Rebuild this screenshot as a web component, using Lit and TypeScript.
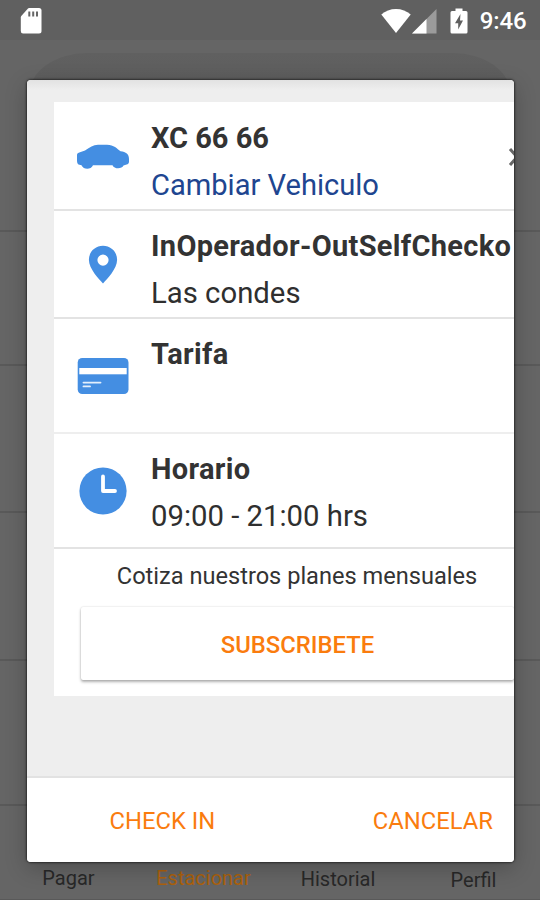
import { LitElement, html, css, svg } from "lit";
import { customElement } from "lit/decorators.js";

const car = svg`<svg class="icon" width="54" height="26" viewBox="0 0 54 26"><path fill="#448ee2" d="M4 8.200L9 6.600C14 3 17 1 22 .700H31C38 1 41 4.500 44.500 7.200C50 8 53 10 53 15V18C53 20 51 20.500 47.500 21.500C46 25 38.500 25.500 36.500 21.200H17C15 26 7.500 26 5.500 21.200L2.500 20.500C1.300 20 1 18 1 16V11C1 9.500 2 8.800 4 8.200Z"/></svg>`;

const pin = svg`<svg class="icon" width="30" height="40" viewBox="0 0 30 40"><path fill="#448ee2" fill-rule="evenodd" d="M15 .8C7 .8.900 7 .9 14.800C.9 24 11 34 15 38.600C19 34 29.100 24 29.100 14.800C29.100 7 23 .8 15 .8ZM15 9.500A5.600 5.600 0 1 1 15 20.700A5.600 5.600 0 1 1 15 9.500Z"/></svg>`;

const card = svg`<svg class="icon" width="52" height="38" viewBox="0 0 52 38"><rect x=".7" y="1" width="50.800" height="36" rx="4.500" fill="#448ee2"/><rect x="2.300" y="11" width="47.400" height="6.300" fill="#fff"/><path d="M6.500 25.600H23.500M6.500 29.400H13" stroke="#e3effc" stroke-width="1.900" stroke-linecap="round"/></svg>`;

const clock = svg`<svg class="icon" width="50" height="50" viewBox="0 0 50 50"><circle cx="25" cy="25" r="23.600" fill="#448ee2"/><path d="M25 10.500V25H37" fill="none" stroke="#fff" stroke-width="3.800" stroke-linecap="round" stroke-linejoin="round"/></svg>`;

@customElement("app-root")
export class AppRoot extends LitElement {
  static styles = css`
    :host {
      display: block;
      position: relative;
      width: 540px;
      height: 900px;
      overflow: hidden;
      background: #656565;
      font-family: Roboto, sans-serif;
      color: #2f2f2f;
    }
    * { box-sizing: border-box; }
    svg { display: block; flex: none; }
    .page { display: flex; flex-direction: column; height: 900px; }
    .status {
      display: flex; align-items: center; flex: none; height: 40px;
      padding: 2px 13.5px 0 20px; background: #606060; color: #fff;
    }
    .wifi { margin-left: auto; }
    .signal { margin-left: 1px; }
    .battery { margin-left: 13px; }
    .time { margin-left: 12px; font-size: 24px; line-height: 38px; font-weight: 500; letter-spacing: -0.1px; }
    .hero { flex: none; height: 192px; padding: 13px 29px 0; border-bottom: 2px solid #595959; }
    .sheet { height: 100px; border-radius: 58px 58px 0 0 / 42px 42px 0 0; background: linear-gradient(#606060, #5d5d5d 40%, #656565); }
    .slot { flex: none; border-bottom: 2px solid #595959; }
    .s1 { height: 134px; }
    .s2 { height: 147px; }
    .s3 { height: 148px; }
    .s4 { height: 145px; }
    .tabs {
      flex: 1; display: flex; align-items: flex-end; padding-bottom: 9px;
      font-size: 20px; line-height: 24px; color: #282828; border-bottom: 1px solid #595959;
    }
    .tab { flex: 0 0 135px; text-align: center; }
    .tab.on { color: #ac610c; }
    .t1, .on { padding-left: 2px; }
    .t3 { padding-left: 1px; margin-bottom: -1px; }
    .t4 { padding-left: 2px; margin-bottom: -2px; }
    .dialog {
      position: absolute; left: 27px; top: 80px; width: 487px; height: 782px;
      display: flex; flex-direction: column; overflow: hidden;
      border-radius: 4px; background: #eee;
    }
    .shade {
      position: absolute; left: 27px; top: 80px; width: 487px; height: 782px; border-radius: 4px;
      box-shadow: 0 0 2px 1px rgba(0,0,0,.5), 0 6px 22px rgba(0,0,0,.24);
    }
    .scroll { flex: 1; padding: 22px 0 0 27px; background: linear-gradient(#e2e2e2, #eee 10px); }
    .panel { width: 540px; height: 594px; background: #fff; }
    .row { display: flex; border-bottom: 2px solid #e3e3e3; padding-top: 12px; }
    .r1 { height: 109px; }
    .r2 { height: 108px; padding-top: 11px; }
    .r3, .r4 { height: 115px; padding-top: 11px; }
    .r3 { border-bottom-color: #eee; }
    .lead { width: 97px; flex: none; display: flex; justify-content: center; align-items: center; }
    .r1 .lead { height: 85px; }
    .r2 .lead { height: 86px; }
    .r3 .lead { height: 92px; }
    .r4 .lead { height: 92px; }
    .copy { width: 362px; flex: none; white-space: nowrap; overflow: hidden; font-size: 29.3px; line-height: 47px; }
    .name { font-weight: 700; font-size: 29px; letter-spacing: .32px; color: #333; padding-top: 1px; line-height: 46px; height: 48px; }
    .r1 .name { letter-spacing: 0; }
    .link { color: #204590; font-size: 29.1px; }
    .r1 .copy { width: 356px; }
    .chev { margin-top: 33px; }
    .note { padding-top: 12px; width: 486px; text-align: center; font-size: 23.6px; line-height: 30px; color: #333; }
    .sub {
      display: flex; align-items: center; justify-content: center;
      margin: 16px 0 0 27px; padding-top: 3px; width: 433px; height: 73px; border-radius: 2px;
      font-size: 23.8px; font-weight: 500; color: #fa7c0e; background: #fff;
      box-shadow: 0 2px 3px rgba(0,0,0,.3), 0 0 2px rgba(0,0,0,.16);
    }
    .foot {
      flex: none; height: 86px; border-top: 2px solid #e2e2e2; background: #fff;
      display: flex; justify-content: space-between; align-items: center;
      padding: 1px 21px 0 82.5px; font-size: 23.8px; color: #fa7c0e;
    }
  `;

  render() {
    return html`
      <div class="page">
        <div class="status">
          <svg width="22" height="28" viewBox="0 0 22 28"><path fill="#fff" d="M9 1H19Q21.500 1 21.500 3.500V24Q21.500 26.500 19 26.500H3Q.8 26.500 .8 24V10.500Q.8 9.500 1.500 8.700L8 1.500Z"/><path d="M9.300 4.500V9.500M13.200 4.500V9.500M17 4.500V9.500" stroke="#666" stroke-width="2"/></svg>
          <svg class="wifi" width="30" height="26" viewBox="0 0 30 26"><path fill="#fff" d="M15 25L.3 6.500C8 -1 22 -1 29.700 6.500Z"/></svg>
          <svg class="signal" width="25" height="25" viewBox="0 0 25 25"><path fill="#9b9b9b" d="M24.500 0V24.500H0Z"/><path fill="#fff" d="M14.500 10V24.500H0Z"/></svg>
          <svg class="battery" width="18" height="26" viewBox="0 0 18 26"><path fill="#fff" d="M5.500 .5H12.500V3H16Q17.500 3 17.500 4.500V24Q17.500 25.500 16 25.500H2Q.5 25.500 .5 24V4.500Q.5 3 2 3H5.500Z"/><path fill="#606060" d="M10.500 6L5 15.300H8.200V21.500L13 12.500H10Z"/></svg>
          <span class="time">9:46</span>
        </div>
        <div class="hero"><div class="sheet"></div></div>
        <div class="slot s1"></div>
        <div class="slot s2"></div>
        <div class="slot s3"></div>
        <div class="slot s4"></div>
        <div class="tabs">
          <span class="tab t1">Pagar</span><span class="tab on">Estacionar</span>
          <span class="tab t3">Historial</span><span class="tab t4">Perfil</span>
        </div>
      </div>
      <div class="shade"></div>
      <div class="dialog">
        <div class="scroll">
          <div class="panel">
            <div class="row r1">
              <div class="lead">${car}</div>
              <div class="copy"><div class="name">XC 66 66</div><div class="link">Cambiar Vehiculo</div></div>
              <svg class="chev" width="13" height="20" viewBox="0 0 13 20"><path d="M3 2L10 10L3 18" fill="none" stroke="#666" stroke-width="3"/></svg>
            </div>
            <div class="row r2">
              <div class="lead">${pin}</div>
              <div class="copy"><div class="name">InOperador-OutSelfChecko</div><div>Las condes</div></div>
            </div>
            <div class="row r3">
              <div class="lead">${card}</div>
              <div class="copy"><div class="name">Tarifa</div></div>
            </div>
            <div class="row r4">
              <div class="lead">${clock}</div>
              <div class="copy"><div class="name">Horario</div><div>09:00 - 21:00 hrs</div></div>
            </div>
            <div class="note">Cotiza nuestros planes mensuales</div>
            <div class="sub">SUBSCRIBETE</div>
          </div>
        </div>
        <div class="foot"><span>CHECK IN</span><span>CANCELAR</span></div>
      </div>
    `;
  }
}
